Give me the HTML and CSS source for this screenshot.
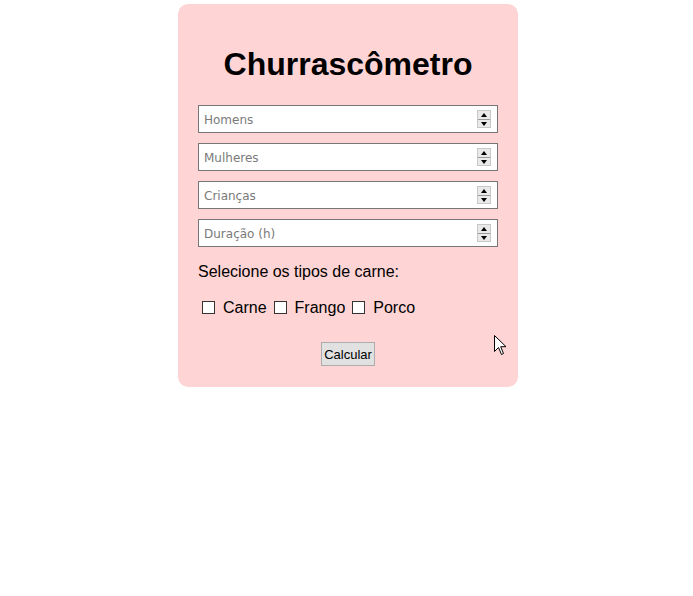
FILE: index.html
```html
<!DOCTYPE html>
<html lang="pt-BR">
<head>
<meta charset="utf-8">
<title>Churrascômetro</title>
<link rel="stylesheet" href="styles.css">
</head>
<body>
<main class="card">
  <h1 class="title">Churrascômetro</h1>
  <div class="fields">
    <div class="field"><input class="num" type="number" placeholder="Homens"><span class="spin"><span class="up"></span><span class="down"></span></span></div>
    <div class="field"><input class="num" type="number" placeholder="Mulheres"><span class="spin"><span class="up"></span><span class="down"></span></span></div>
    <div class="field"><input class="num" type="number" placeholder="Crianças"><span class="spin"><span class="up"></span><span class="down"></span></span></div>
    <div class="field"><input class="num" type="number" placeholder="Duração (h)"><span class="spin"><span class="up"></span><span class="down"></span></span></div>
  </div>
  <p class="label">Selecione os tipos de carne:</p>
  <div class="checks">
    <input class="box" type="checkbox" id="c1"><label for="c1">Carne</label>
    <input class="box" type="checkbox" id="c2"><label for="c2">Frango</label>
    <input class="box" type="checkbox" id="c3"><label for="c3">Porco</label>
  </div>
  <div class="actions"><button class="btn" type="button">Calcular</button></div>
</main>
<svg class="cursor" width="13" height="21" viewBox="0 0 13 21"><path d="M0.5 0.5 L0.5 16.5 L4.5 12.5 L7.5 19.5 L9.5 18.5 L6.7 11.7 L12 11.7 Z" fill="#fff" stroke="#000" stroke-width="1" stroke-linejoin="miter"/></svg>
</body>
</html>
```
FILE: styles.css
```css
html, body {
  margin: 0;
  padding: 0;
  background: #fff;
}
body {
  padding: 4px 0 0 3px;
  font-family: "Liberation Sans", Arial, sans-serif;
  position: relative;
  min-height: 592px;
}
.card {
  width: 300px;
  margin: 0 auto;
  padding: 20px 20px 21px;
  background: #ffd4d4;
  border-radius: 10px;
  box-sizing: content-box;
}
.title {
  margin: 22px 0 22px;
  font-size: 32px;
  line-height: 37px;
  font-weight: bold;
  text-align: center;
  color: #000;
}
.fields {
  display: flex;
  flex-direction: column;
  gap: 10px;
}
.field {
  position: relative;
  height: 28px;
}
.num {
  box-sizing: border-box;
  width: 300px;
  height: 28px;
  margin: 0;
  padding: 2px 0 0 5px;
  border: 1px solid #767676;
  border-radius: 0;
  background: #fff;
  font-family: "DejaVu Sans", Tahoma, sans-serif;
  font-size: 12px;
  color: #000;
  outline: none;
  -moz-appearance: textfield;
}
.num::placeholder {
  color: #7a7a7a;
}
.num::-webkit-inner-spin-button,
.num::-webkit-outer-spin-button {
  -webkit-appearance: none;
  margin: 0;
}
.spin {
  position: absolute;
  right: 7px;
  top: 5px;
  width: 14px;
  height: 18px;
  display: flex;
  flex-direction: column;
  box-sizing: border-box;
  border: 1px solid #c8c8c8;
  background: #e9e9e9;
}
.spin .up, .spin .down {
  flex: 1;
  position: relative;
}
.spin .up {
  border-bottom: 1px solid #9a9a9a;
}
.spin .up::after, .spin .down::after {
  content: "";
  position: absolute;
  left: 3px;
  width: 0;
  height: 0;
  border-left: 3px solid transparent;
  border-right: 3px solid transparent;
}
.spin .up::after {
  top: 2px;
  border-bottom: 4px solid #000;
}
.spin .down::after {
  top: 2px;
  border-top: 4px solid #000;
}
.label {
  margin: 16px 0 0;
  font-size: 16px;
  line-height: 18px;
  color: #000;
}
.checks {
  margin-top: 17px;
  height: 19px;
  display: flex;
  align-items: center;
  font-size: 16px;
  line-height: 19px;
  color: #000;
}
.box {
  -webkit-appearance: none;
  appearance: none;
  width: 13px;
  height: 13px;
  margin: 0 8px 0 4px;
  border: 1px solid #333;
  border-radius: 0;
  background: #fff;
  box-sizing: border-box;
}
.checks label {
  margin-right: 3px;
}
.actions {
  margin-top: 25px;
  display: flex;
  justify-content: center;
}
.btn {
  height: 24px;
  padding: 0 2px;
  margin: 0;
  border: 1px solid #adadad;
  border-radius: 0;
  background: #e1e1e1;
  font-family: "Liberation Sans", Arial, sans-serif;
  font-size: 13px;
  color: #000;
}
.cursor {
  position: absolute;
  left: 494px;
  top: 335px;
}
```
